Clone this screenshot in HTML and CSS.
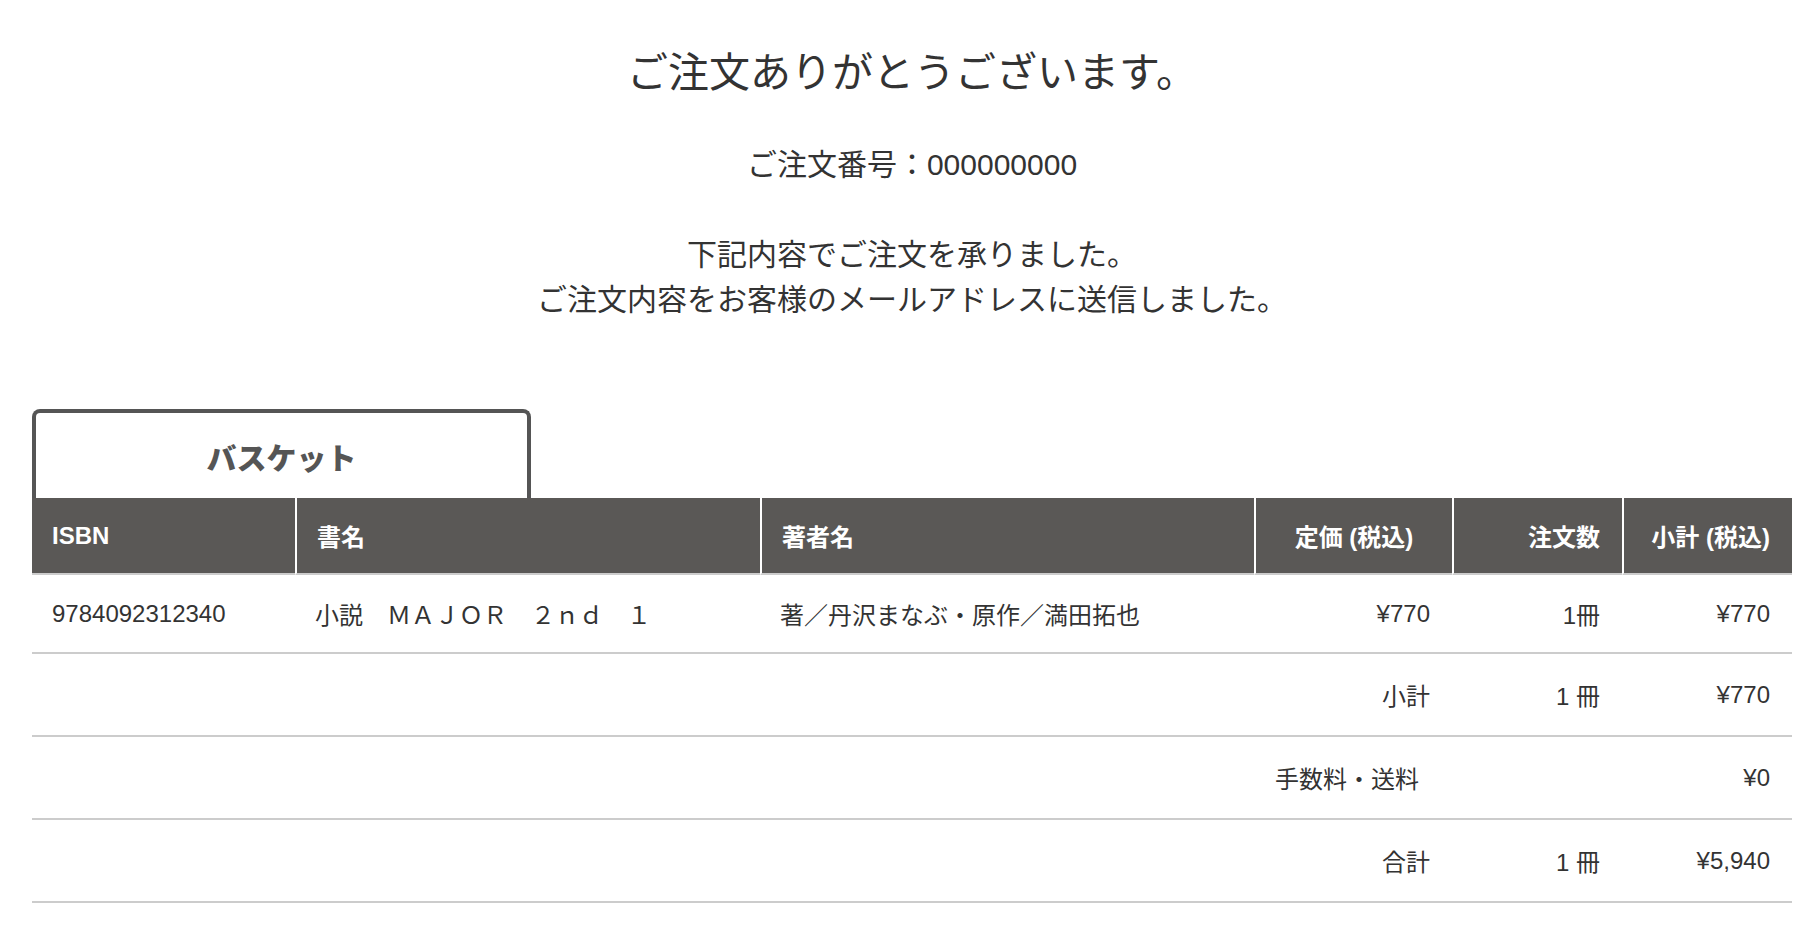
FILE: index.html
```html
<!DOCTYPE html>
<html lang="ja">

<head>
    <meta charset="UTF-8">
    <meta name="viewport" content="width=device-width, initial-scale=1.0">
    <title>ご注文完了</title>
    <link rel="stylesheet" href="styles.css">
</head>

<body>
    <div class="page">
        <h1 class="thanks-title">ご注文ありがとうございます。</h1>
        <p class="order-no">ご注文番号：000000000</p>
        <p class="order-message">下記内容でご注文を承りました。<br>ご注文内容をお客様のメールアドレスに送信しました。</p>

        <div class="basket">
            <div class="basket-tab">バスケット</div>
            <table class="basket-table">
                <colgroup>
                    <col class="col-isbn">
                    <col class="col-title">
                    <col class="col-author">
                    <col class="col-price">
                    <col class="col-qty">
                    <col class="col-sum">
                </colgroup>
                <thead>
                    <tr>
                        <th>ISBN</th>
                        <th>書名</th>
                        <th>著者名</th>
                        <th class="th-center">定価 (税込)</th>
                        <th class="th-right">注文数</th>
                        <th class="th-right">小計 (税込)</th>
                    </tr>
                </thead>
                <tbody>
                    <tr class="item-row">
                        <td>9784092312340</td>
                        <td>小説　ＭＡＪＯＲ　２ｎｄ　１</td>
                        <td>著／丹沢まなぶ・原作／満田拓也</td>
                        <td class="num">¥770</td>
                        <td class="num">1冊</td>
                        <td class="num">¥770</td>
                    </tr>
                    <tr class="total-row">
                        <td colspan="3"></td>
                        <td class="num">小計</td>
                        <td class="num">1 冊</td>
                        <td class="num">¥770</td>
                    </tr>
                    <tr class="total-row">
                        <td colspan="3"></td>
                        <td class="label-left">手数料・送料</td>
                        <td></td>
                        <td class="num">¥0</td>
                    </tr>
                    <tr class="total-row">
                        <td colspan="3"></td>
                        <td class="num">合計</td>
                        <td class="num">1 冊</td>
                        <td class="num">¥5,940</td>
                    </tr>
                </tbody>
            </table>
        </div>
    </div>
</body>

</html>
```

FILE: styles.css
```css
* {
    padding: 0;
    margin: 0;
    box-sizing: border-box;
}

html,
body {
    width: 100%;
    background-color: #fff;
}

body {
    color: #333;
    font-family: "Liberation Sans", "Noto Sans CJK JP", sans-serif;
}

.page {
    padding: 44px 24px 60px 32px;
    text-align: center;
}

.thanks-title {
    font-size: 41px;
    line-height: 58px;
    font-weight: normal;
}

.order-no {
    margin-top: 44px;
    font-size: 30px;
    line-height: 38px;
}

.order-message {
    margin-top: 48px;
    font-size: 30px;
    line-height: 45px;
}

/* basket */

.basket {
    margin-top: 87px;
    text-align: left;
}

.basket-tab {
    display: flex;
    align-items: center;
    justify-content: center;
    width: 499px;
    height: 89px;
    border: 4px solid #555;
    border-bottom: none;
    border-radius: 8px 8px 0 0;
    color: #555;
    font-size: 30px;
    font-weight: 900;
}

.basket-table {
    width: 100%;
    table-layout: fixed;
    border-collapse: separate;
    border-spacing: 0;
    font-size: 24px;
}

.col-isbn { width: 263px; }
.col-title { width: 465px; }
.col-author { width: 494px; }
.col-price { width: 198px; }
.col-qty { width: 170px; }
.col-sum { width: 170px; }

.basket-table th {
    height: 77px;
    padding: 0 20px;
    background-color: #5a5856;
    color: #fff;
    font-weight: bold;
    text-align: left;
    border-bottom: 2px solid #ccc;
}

.basket-table th + th {
    border-left: 2px solid #fff;
}

.basket-table th.th-center {
    text-align: center;
}

.basket-table th.th-right {
    text-align: right;
    padding-right: 22px;
}

.basket-table td {
    padding: 0 20px;
    border-bottom: 2px solid #ccc;
    white-space: nowrap;
}

.item-row td {
    height: 79px;
}

.total-row td {
    height: 83px;
}

.basket-table td.num {
    text-align: right;
    padding-right: 22px;
}

.basket-table td.label-left {
    text-align: left;
    padding-left: 21px;
}
```
